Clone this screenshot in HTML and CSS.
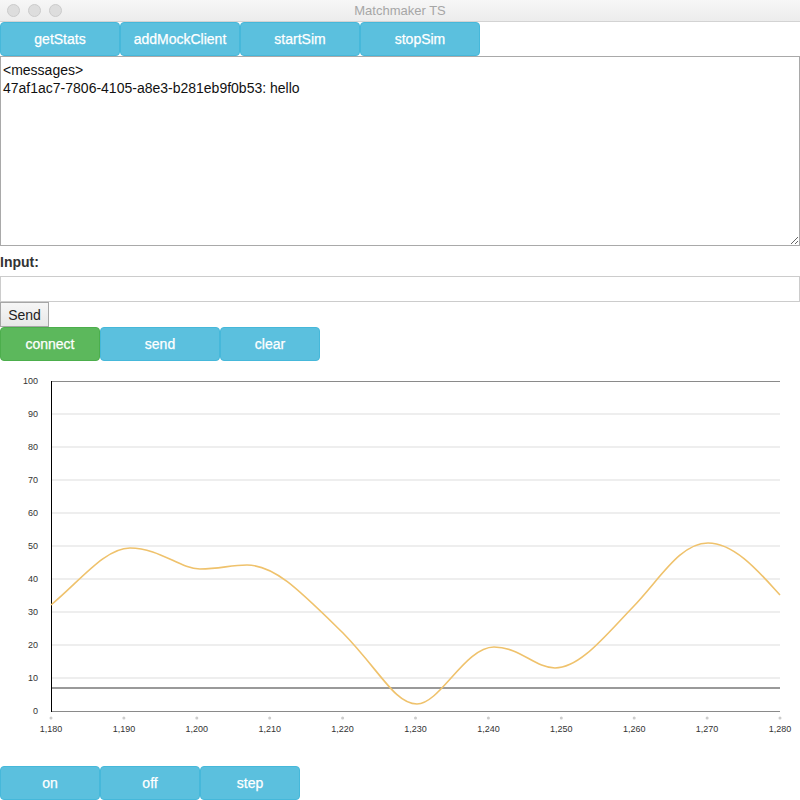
FILE: index.html
```html
<!DOCTYPE html>
<html>
<head>
<meta charset="utf-8">
<title>Matchmaker TS</title>
<link rel="stylesheet" href="styles.css">
</head>
<body>
<div class="titlebar">
  <div class="lights"><span class="light"></span><span class="light"></span><span class="light"></span></div>
  <div class="title">Matchmaker TS</div>
</div>
<div class="btn-row top">
  <button class="btn info">getStats</button>
  <button class="btn info">addMockClient</button>
  <button class="btn info">startSim</button>
  <button class="btn info">stopSim</button>
</div>
<textarea class="messages" readonly>&lt;messages&gt;
47af1ac7-7806-4105-a8e3-b281eb9f0b53: hello</textarea>
<div class="label">Input:</div>
<input class="input" type="text">
<div class="send-wrap"><button class="send-btn">Send</button></div>
<div class="btn-row mid">
  <button class="btn success">connect</button>
  <button class="btn info wide">send</button>
  <button class="btn info">clear</button>
</div>
<svg class="chart" width="800" height="405" viewBox="0 0 800 405">
  <g class="grid">
    <line x1="51" y1="53" x2="780" y2="53"/>
    <line x1="51" y1="86" x2="780" y2="86"/>
    <line x1="51" y1="119" x2="780" y2="119"/>
    <line x1="51" y1="152" x2="780" y2="152"/>
    <line x1="51" y1="185" x2="780" y2="185"/>
    <line x1="51" y1="218" x2="780" y2="218"/>
    <line x1="51" y1="251" x2="780" y2="251"/>
    <line x1="51" y1="284" x2="780" y2="284"/>
    <line x1="51" y1="317" x2="780" y2="317"/>
  </g>
  <line class="frame" x1="51" y1="20.5" x2="780" y2="20.5"/>
  <line class="frame" x1="51" y1="350.5" x2="780" y2="350.5"/>
  <line class="yaxis" x1="51.5" y1="20" x2="51.5" y2="351"/>
  <line class="threshold" x1="52" y1="327" x2="780" y2="327"/>
  <path class="series" d="M51,244 C80,220 105,187 130,187 C160,187 180,208 200,208 C220,208 230,204 247,204 C275,204 300,230 343,272 C380,310 395,343 417,343 C440,343 465,286 494,286 C520,286 535,307 555,307 C580,307 605,275 633,246 C660,218 680,182 708,182 C735,182 760,212 780,234"/>
  <g class="ylabels">
    <text x="38" y="23">100</text>
    <text x="38" y="56">90</text>
    <text x="38" y="89">80</text>
    <text x="38" y="122">70</text>
    <text x="38" y="155">60</text>
    <text x="38" y="188">50</text>
    <text x="38" y="221">40</text>
    <text x="38" y="254">30</text>
    <text x="38" y="287">20</text>
    <text x="38" y="320">10</text>
    <text x="38" y="353">0</text>
  </g>
  <g class="ticks">
    <circle cx="51" cy="357" r="1.5"/>
    <circle cx="123.9" cy="357" r="1.5"/>
    <circle cx="196.8" cy="357" r="1.5"/>
    <circle cx="269.7" cy="357" r="1.5"/>
    <circle cx="342.6" cy="357" r="1.5"/>
    <circle cx="415.5" cy="357" r="1.5"/>
    <circle cx="488.4" cy="357" r="1.5"/>
    <circle cx="561.3" cy="357" r="1.5"/>
    <circle cx="634.2" cy="357" r="1.5"/>
    <circle cx="707.1" cy="357" r="1.5"/>
    <circle cx="780" cy="357" r="1.5"/>
  </g>
  <g class="xlabels">
    <text x="51" y="371">1,180</text>
    <text x="123.9" y="371">1,190</text>
    <text x="196.8" y="371">1,200</text>
    <text x="269.7" y="371">1,210</text>
    <text x="342.6" y="371">1,220</text>
    <text x="415.5" y="371">1,230</text>
    <text x="488.4" y="371">1,240</text>
    <text x="561.3" y="371">1,250</text>
    <text x="634.2" y="371">1,260</text>
    <text x="707.1" y="371">1,270</text>
    <text x="780" y="371">1,280</text>
  </g>
</svg>
<div class="btn-row bottom">
  <button class="btn info">on</button>
  <button class="btn info">off</button>
  <button class="btn info">step</button>
</div>
</body>
</html>
```

FILE: styles.css
```css
html, body {
  margin: 0;
  padding: 0;
  background: #fff;
  width: 800px;
  height: 800px;
  overflow: hidden;
  font-family: "Liberation Sans", Arial, sans-serif;
  font-size: 14px;
  color: #222;
}

.titlebar {
  height: 21px;
  background: linear-gradient(#f7f7f7, #ececec);
  border-bottom: 1px solid #d3d3d3;
  display: flex;
  align-items: center;
  position: relative;
}

.lights {
  display: flex;
  gap: 8px;
  padding-left: 7px;
}

.light {
  width: 11px;
  height: 11px;
  border-radius: 50%;
  background: #dddddd;
  border: 0.5px solid #cbcbcb;
}

.title {
  position: absolute;
  left: 0;
  right: 0;
  text-align: center;
  color: #a6a6a6;
  font-size: 13px;
  top: 3px;
}

.btn-row {
  display: flex;
}

.btn {
  height: 34px;
  margin: 0;
  padding: 0;
  border-radius: 4px;
  color: #fff;
  font-family: "Liberation Sans", Arial, sans-serif;
  font-size: 14px;
  cursor: pointer;
  box-sizing: border-box;
  -webkit-text-stroke: 0.25px #fff;
}

.top .btn { width: 120px; }
.mid .btn, .bottom .btn { width: 100px; }
.mid .btn.wide { width: 120px; }

.info {
  background: #5bc0de;
  border: 1px solid #46b8da;
}

.success {
  background: #5cb85c;
  border: 1px solid #4cae4c;
}

.messages {
  display: block;
  box-sizing: border-box;
  width: 800px;
  height: 190px;
  margin: 0;
  padding: 4px 2px 2px;
  border: 1px solid #a9a9a9;
  font-family: "Liberation Sans", Arial, sans-serif;
  font-size: 14px;
  line-height: 18px;
  color: #111;
  resize: both;
  outline: none;
}

.label {
  height: 30px;
  box-sizing: border-box;
  padding-top: 8px;
  font-weight: bold;
  font-size: 14px;
  color: #333;
}

.input {
  display: block;
  box-sizing: border-box;
  width: 800px;
  height: 26px;
  margin: 0;
  border: 1px solid #cccccc;
  padding: 0 4px;
  outline: none;
}

.send-wrap {
  height: 25px;
}

.send-btn {
  box-sizing: border-box;
  width: 49px;
  height: 25px;
  margin: 0;
  padding: 0;
  background: linear-gradient(#f6f6f6, #e8e8e8);
  border: 1px solid #a6a6a6;
  border-radius: 0;
  font-family: "Liberation Sans", Arial, sans-serif;
  font-size: 14px;
  color: #222;
}

.chart {
  display: block;
}

.grid line {
  stroke: #dddddd;
  stroke-width: 1;
}

.frame {
  stroke: #8a8a8a;
  stroke-width: 1;
}

.yaxis {
  stroke: #000;
  stroke-width: 1;
}

.threshold {
  stroke: #999999;
  stroke-width: 2;
}

.series {
  fill: none;
  stroke: #efc26c;
  stroke-width: 1.6;
}

.ylabels text {
  font-family: "Liberation Sans", Arial, sans-serif;
  font-size: 9px;
  fill: #333;
  text-anchor: end;
}

.xlabels text {
  font-family: "Liberation Sans", Arial, sans-serif;
  font-size: 9px;
  fill: #333;
  text-anchor: middle;
}

.ticks circle {
  fill: #cccccc;
}
```
